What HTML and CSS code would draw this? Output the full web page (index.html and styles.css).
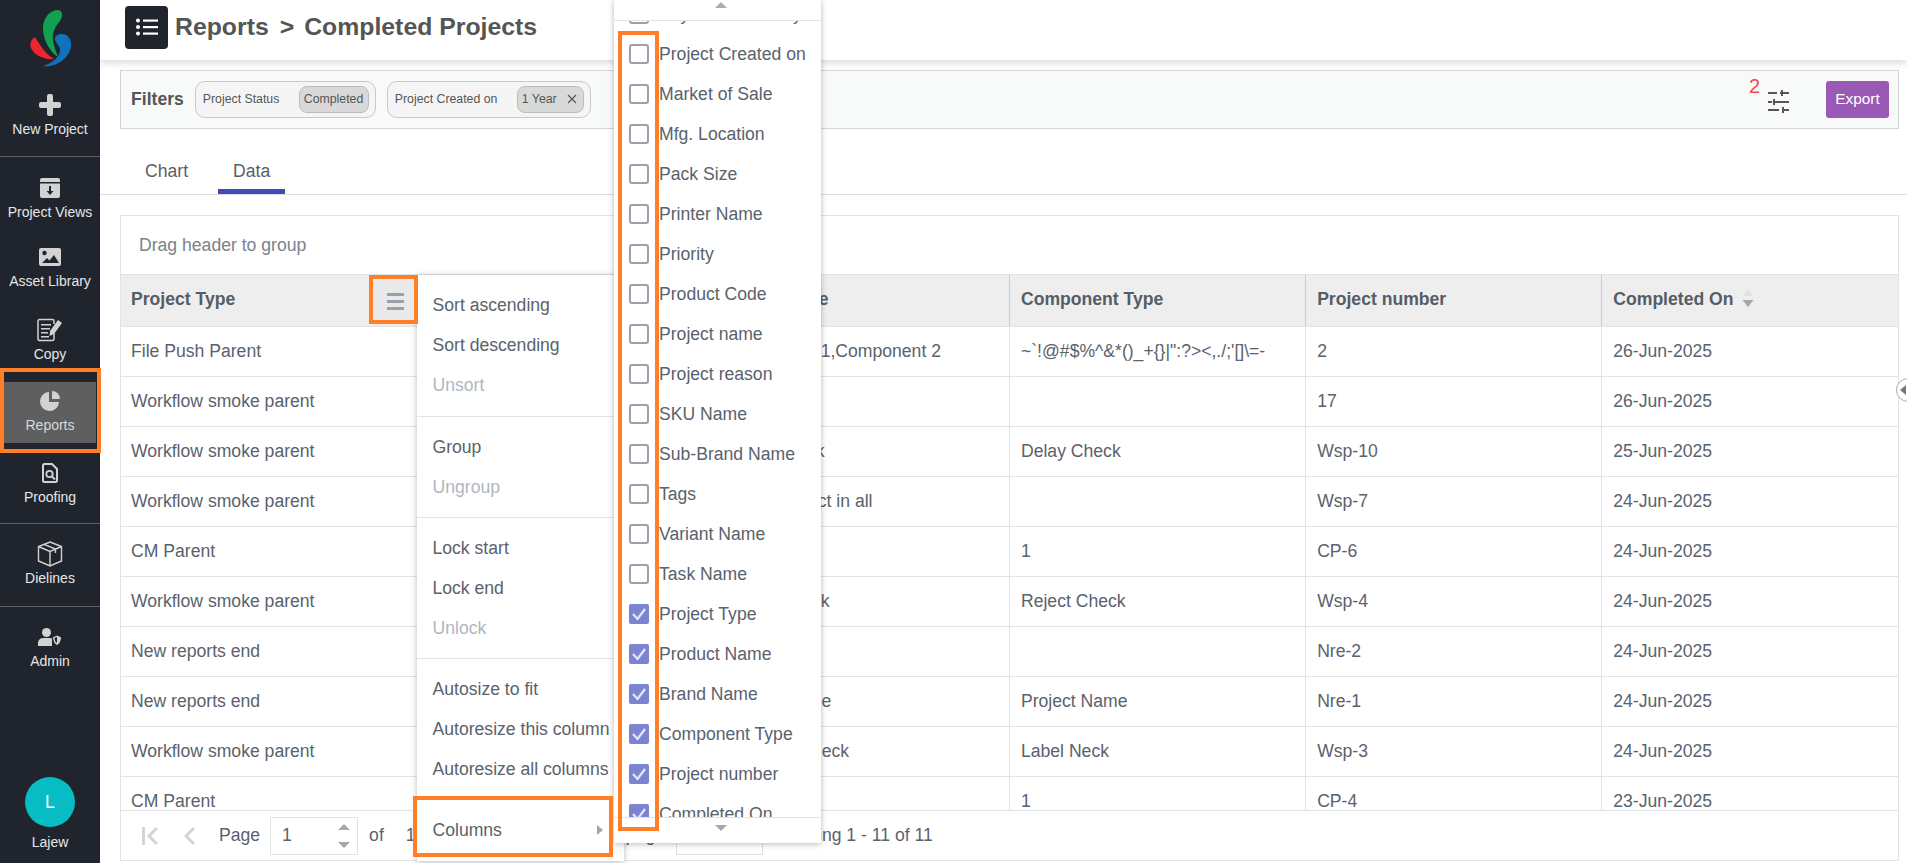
FILE: index.html
```html
<!DOCTYPE html>
<html lang="en">
<head>
<meta charset="utf-8">
<title>Completed Projects</title>
<link rel="stylesheet" href="styles.css">
</head>
<body>
<div class="app">
  <aside class="side">
    <div class="logo">
      <svg width="100" height="85" viewBox="0 0 100 85">
        <path fill="#12a150" d="M58 10C63 10 63 17 60 21C54 28 51 35 54 45C55 50 57 53 58 57C50 52 43 40 43 28C43 18 50 10 58 10Z"/>
        <path fill="#ee2430" d="M35 37C39 43 44 53 54 59C44 60 34 55 31 48C29 43 32 39 35 37Z"/>
        <path fill="#0f72bd" d="M62 34C68 34 72 40 71 47C69 58 56 68 43 66C53 63 61 56 60 49C59 45 55 42 55 39C55 36 58 34 62 34Z"/>
      </svg>
    </div>
    <div class="group group-first">
      <a class="item"><span class="ico"><svg width="22" height="22" viewBox="0 0 22 22"><path fill="#d2d2d2" d="M8 2a2 2 0 0 1 2-2h2a2 2 0 0 1 2 2v6h6a2 2 0 0 1 2 2v2a2 2 0 0 1-2 2h-6v6a2 2 0 0 1-2 2h-2a2 2 0 0 1-2-2v-6H2a2 2 0 0 1-2-2v-2a2 2 0 0 1 2-2h6Z"/></svg></span><span class="lbl">New Project</span></a>
    </div>
    <div class="group group-main">
      <a class="item"><span class="ico"><svg width="22" height="20" viewBox="0 0 22 20"><path fill="#d2d2d2" d="M3 0h16a2 2 0 0 1 2 2v16a2 2 0 0 1-2 2H3a2 2 0 0 1-2-2V2a2 2 0 0 1 2-2Z"/><path fill="#20252d" d="M1 4h20v1.4H1zM10 8h2v5h2.5L11 17l-3.500-4H10z"/></svg></span><span class="lbl">Project Views</span></a>
      <a class="item"><span class="ico"><svg width="22" height="18" viewBox="0 0 22 18"><rect width="22" height="18" rx="2" fill="#d2d2d2"/><circle cx="5.500" cy="5" r="2.200" fill="#20252d"/><path fill="#20252d" d="M3 15l5-5 2.500 2.500L15 7l5 8Z"/></svg></span><span class="lbl">Asset Library</span></a>
      <a class="item"><span class="ico"><svg width="26" height="24" viewBox="0 0 26 24"><path fill="none" stroke="#d2d2d2" stroke-width="1.500" d="M17 14v7a1.500 1.500 0 0 1-1.500 1.500h-13A1.500 1.500 0 0 1 1 21V3a1.500 1.500 0 0 1 1.500-1.500h13A1.500 1.500 0 0 1 17 3v3"/><path fill="#d2d2d2" d="M4 6h10v1.600H4zM4 10h9v1.600H4zM4 14h7v1.600H4zM4 18h8v1.600H4zM21 2l4 3-8 11-4.500 2 .5-5Z"/></svg></span><span class="lbl">Copy</span></a>
      <a class="item item-active"><span class="ico"><svg width="20" height="20" viewBox="0 0 20 20"><path fill="#d2d2d2" d="M9 1a9.500 9.500 0 1 0 10 10H9Z"/><path fill="#d2d2d2" d="M12 0a8 8 0 0 1 8 8h-8Z"/></svg></span><span class="lbl">Reports</span></a>
      <a class="item"><span class="ico"><svg width="16" height="20" viewBox="0 0 16 20"><path fill="none" stroke="#d2d2d2" stroke-width="2" d="M2.500 1H10l5 5v11.500a1.500 1.500 0 0 1-1.500 1.500h-11A1.500 1.500 0 0 1 1 17.500v-15A1.500 1.500 0 0 1 2.500 1Z"/><circle cx="7.500" cy="11" r="3.200" fill="none" stroke="#d2d2d2" stroke-width="1.800"/><path stroke="#d2d2d2" stroke-width="2" d="M10 13.500l3 3"/></svg></span><span class="lbl">Proofing</span></a>
    </div>
    <div class="group">
      <a class="item"><span class="ico"><svg width="26" height="26" viewBox="0 0 26 26"><path fill="none" stroke="#d2d2d2" stroke-width="1.400" d="M13 1l11.500 4.500v14.500L13 25 1.500 20V5.500ZM1.500 5.500L13 10.500 24.500 5.500M13 10.500V25M7 3.300l11.500 4.700V12"/></svg></span><span class="lbl">Dielines</span></a>
    </div>
    <div class="group">
      <a class="item"><span class="ico"><svg width="24" height="18" viewBox="0 0 24 18"><circle cx="8.500" cy="4.500" r="4.500" fill="#d2d2d2"/><path fill="#d2d2d2" d="M0 18v-3a5 5 0 0 1 5-5h7a5 5 0 0 1 2 .4V18Z"/><path fill="#d2d2d2" stroke="#20252d" d="M19 7l4.500 2c0 4-1.500 7-4.500 8.500-3-1.500-4.500-4.500-4.500-8.500Z"/><path fill="#20252d" d="M19 9v6c-1.600-1-2.500-3-2.500-5Z"/></svg></span><span class="lbl">Admin</span></a>
    </div>
    <div class="user">
      <div class="avatar">L</div>
      <span class="lbl">Lajew</span>
    </div>
  </aside>

  <main class="main">
    <header class="top">
      <button class="menu-btn" type="button">
        <svg width="22" height="18" viewBox="0 0 22 18"><g fill="#fff"><circle cx="2" cy="2.500" r="2"/><circle cx="2" cy="9" r="2"/><circle cx="2" cy="15.500" r="2"/><rect x="7" y="1.500" width="15" height="2.200"/><rect x="7" y="8" width="15" height="2.200"/><rect x="7" y="14.500" width="15" height="2.200"/></g></svg>
      </button>
      <h1 class="title">Reports<span class="crumb-sep">&gt;</span>Completed Projects</h1>
    </header>

    <section class="filters">
      <strong class="filters-label">Filters</strong>
      <div class="chip chip-status"><span>Project Status</span><span class="pill">Completed</span></div>
      <div class="chip chip-created"><span>Project Created on</span><span class="pill">1 Year <svg class="pill-x" width="10" height="10" viewBox="0 0 10 10"><path stroke="#555" stroke-width="1.200" d="M1 1l8 8M9 1l-8 8"/></svg></span></div>
      <span class="filter-count">2</span>
      <svg class="sliders" width="21" height="23" viewBox="0 0 21 23"><g fill="#555"><rect y="2" width="9" height="2"/><rect x="12" y="2" width="9" height="2"/><rect x="13" width="2" height="6"/><rect y="11" width="4" height="2"/><rect x="7" y="11" width="14" height="2"/><rect x="5" y="9" width="2" height="6"/><rect y="19" width="11" height="2"/><rect x="14" y="19" width="7" height="2"/><rect x="14" y="17" width="2" height="6"/></g></svg>
      <button class="export" type="button">Export</button>
    </section>

    <nav class="tabs">
      <a class="tab">Chart</a>
      <a class="tab tab-active">Data</a>
    </nav>

    <section class="grid">
      <div class="group-bar">Drag header to group</div>
      <div class="grid-body">
        <table class="table">
          <thead>
            <tr><th>Project Type</th><th>Product Name</th><th>Brand Name</th><th>Component Type</th><th>Project number</th><th>Completed On<svg class="sort" width="12" height="18" viewBox="0 0 12 18"><path fill="#e2e3e5" d="M6 0l5.500 7H.5Z"/><path fill="#a3a8b0" d="M.5 11h11L6 18Z"/></svg></th></tr>
          </thead>
          <tbody>
            <tr><td>File Push Parent</td><td></td><td>Component 1,Component 2</td><td>~`!@#$%^&amp;*()_+{}|":?&gt;&lt;,./;'[]\=-</td><td>2</td><td>26-Jun-2025</td></tr>
            <tr><td>Workflow smoke parent</td><td></td><td></td><td></td><td>17</td><td>26-Jun-2025</td></tr>
            <tr><td>Workflow smoke parent</td><td></td><td>Delay Check</td><td>Delay Check</td><td>Wsp-10</td><td>25-Jun-2025</td></tr>
            <tr><td>Workflow smoke parent</td><td></td><td>Label product in all</td><td></td><td>Wsp-7</td><td>24-Jun-2025</td></tr>
            <tr><td>CM Parent</td><td></td><td></td><td>1</td><td>CP-6</td><td>24-Jun-2025</td></tr>
            <tr><td>Workflow smoke parent</td><td></td><td>Reject Check</td><td>Reject Check</td><td>Wsp-4</td><td>24-Jun-2025</td></tr>
            <tr><td>New reports end</td><td></td><td></td><td></td><td>Nre-2</td><td>24-Jun-2025</td></tr>
            <tr><td>New reports end</td><td></td><td>Project Name</td><td>Project Name</td><td>Nre-1</td><td>24-Jun-2025</td></tr>
            <tr><td>Workflow smoke parent</td><td></td><td>Approval Check</td><td>Label Neck</td><td>Wsp-3</td><td>24-Jun-2025</td></tr>
            <tr><td>CM Parent</td><td></td><td></td><td>1</td><td>CP-4</td><td>23-Jun-2025</td></tr>
          </tbody>
        </table>
      </div>
      <footer class="pager">
        <svg class="pg-first" width="17" height="18" viewBox="0 0 17 18"><path fill="#d3d5d8" d="M0 0h3v18H0z"/><path fill="none" stroke="#d3d5d8" stroke-width="3" d="M15 1L7 9l8 8"/></svg>
        <svg class="pg-prev" width="11" height="18" viewBox="0 0 11 18"><path fill="none" stroke="#d3d5d8" stroke-width="3" d="M10 1L2 9l8 8"/></svg>
        <span class="pg-page">Page</span>
        <div class="pg-input"><span>1</span>
          <svg width="12" height="24" viewBox="0 0 12 24"><path fill="#a3a8b0" d="M6 0l6 6H0ZM0 18h12l-6 6Z"/></svg>
        </div>
        <span class="pg-of">of</span>
        <span class="pg-total">1</span>
        <span class="pg-per">Per page</span>
        <div class="pg-size"></div>
        <span class="pg-count">Showing 1 - 11 of 11</span>
      </footer>
    </section>
  </main>
</div>

<div class="col-menu">
  <div class="cm-group"><div class="cm-item">Sort ascending</div><div class="cm-item">Sort descending</div><div class="cm-item cm-off">Unsort</div></div>
  <div class="cm-group"><div class="cm-item">Group</div><div class="cm-item cm-off">Ungroup</div></div>
  <div class="cm-group"><div class="cm-item">Lock start</div><div class="cm-item">Lock end</div><div class="cm-item cm-off">Unlock</div></div>
  <div class="cm-group"><div class="cm-item">Autosize to fit</div><div class="cm-item">Autoresize this column</div><div class="cm-item">Autoresize all columns</div></div>
  <div class="cm-group cm-last"><div class="cm-item cm-sub">Columns<span class="cm-arrow"></span></div></div>
</div>

<div class="col-list">
  <div class="cl-arrow cl-up"></div>
  <div class="cl-scroll">
    <div class="cl-items">
      <label class="cl-item"><span class="box"></span>Key Accountability</label>
      <label class="cl-item"><span class="box"></span>Project Created on</label>
      <label class="cl-item"><span class="box"></span>Market of Sale</label>
      <label class="cl-item"><span class="box"></span>Mfg. Location</label>
      <label class="cl-item"><span class="box"></span>Pack Size</label>
      <label class="cl-item"><span class="box"></span>Printer Name</label>
      <label class="cl-item"><span class="box"></span>Priority</label>
      <label class="cl-item"><span class="box"></span>Product Code</label>
      <label class="cl-item"><span class="box"></span>Project name</label>
      <label class="cl-item"><span class="box"></span>Project reason</label>
      <label class="cl-item"><span class="box"></span>SKU Name</label>
      <label class="cl-item"><span class="box"></span>Sub-Brand Name</label>
      <label class="cl-item"><span class="box"></span>Tags</label>
      <label class="cl-item"><span class="box"></span>Variant Name</label>
      <label class="cl-item"><span class="box"></span>Task Name</label>
      <label class="cl-item"><span class="box box-on"><svg width="16" height="14" viewBox="0 0 16 14"><path fill="none" stroke="#e6e7f6" stroke-width="2.200" d="M2 7l4.500 5L14 2"/></svg></span>Project Type</label>
      <label class="cl-item"><span class="box box-on"><svg width="16" height="14" viewBox="0 0 16 14"><path fill="none" stroke="#e6e7f6" stroke-width="2.200" d="M2 7l4.500 5L14 2"/></svg></span>Product Name</label>
      <label class="cl-item"><span class="box box-on"><svg width="16" height="14" viewBox="0 0 16 14"><path fill="none" stroke="#e6e7f6" stroke-width="2.200" d="M2 7l4.500 5L14 2"/></svg></span>Brand Name</label>
      <label class="cl-item"><span class="box box-on"><svg width="16" height="14" viewBox="0 0 16 14"><path fill="none" stroke="#e6e7f6" stroke-width="2.200" d="M2 7l4.500 5L14 2"/></svg></span>Component Type</label>
      <label class="cl-item"><span class="box box-on"><svg width="16" height="14" viewBox="0 0 16 14"><path fill="none" stroke="#e6e7f6" stroke-width="2.200" d="M2 7l4.500 5L14 2"/></svg></span>Project number</label>
      <label class="cl-item"><span class="box box-on"><svg width="16" height="14" viewBox="0 0 16 14"><path fill="none" stroke="#e6e7f6" stroke-width="2.200" d="M2 7l4.500 5L14 2"/></svg></span>Completed On</label>
    </div>
  </div>
  <div class="cl-arrow cl-down"></div>
</div>

<button class="head-menu" type="button"><span></span><span></span><span></span></button>
<div class="handle"><i></i></div>

<div class="mark mark-reports"></div>
<div class="mark mark-icon"></div>
<div class="mark mark-columns"></div>
<div class="mark mark-boxes"></div>
</body>
</html>
```

FILE: styles.css
```css
* { box-sizing: border-box; }
html, body { margin: 0; height: 100%; overflow: hidden; background: #fff; }
body { font-family: "Liberation Sans", Arial, sans-serif; font-size: 17.6px; color: #5a626c; position: relative; }

.app { display: flex; height: 863px; }

/* sidebar */
.side { width: 100px; flex: none; background: #20252d; display: flex; flex-direction: column; color: #e6e6e6; }
.logo { height: 85px; }
.logo svg { display: block; }
.group { display: flex; flex-direction: column; gap: 23px; padding: 17px 0; border-bottom: 1px solid #5c6066; }
.group-first { padding: 7px 0 16px; }
.group:nth-child(5) { border-bottom: 0; }
.group-main { padding: 18px 0 15px; }
.group-main .item:nth-child(2) { margin-top: -2px; }
.group-main .item:nth-child(3) { margin-top: 2px; }
.group-main .item:nth-child(5) { margin-top: 1px; }
.item { display: flex; flex-direction: column; align-items: center; height: 48px; }
.item-active { background: #5f5f5f; margin: -6px 4px -7px; padding: 6px 0 7px; height: 61px; color: #d8d8d8; }
.ico { height: 26px; display: flex; align-items: center; justify-content: center; }
.ico svg { display: block; }
.lbl { font-size: 14px; line-height: 22px; white-space: nowrap; }
.user { margin-top: auto; display: flex; flex-direction: column; align-items: center; padding-bottom: 10px; gap: 4px; }
.avatar { width: 50px; height: 50px; border-radius: 50%; background: #07bcc2; color: #fff; font-size: 17.6px; display: flex; align-items: center; justify-content: center; }

/* main */
.main { flex: 1; min-width: 0; display: flex; flex-direction: column; }
.top { height: 60px; flex: none; display: flex; align-items: center; padding: 0 0 6px 25px; box-shadow: 0 2px 8px rgba(0,0,0,.18); }
.menu-btn { width: 43px; height: 43px; border: 0; border-radius: 4px; background: #20252d; display: flex; align-items: center; justify-content: center; padding: 0; }
.title { margin: 0 0 0 7px; font-size: 24.8px; font-weight: 700; color: #555; line-height: 30px; }
.crumb-sep { margin: 0 10px 0 11px; }

.filters { margin: 10px 8px 0 20px; height: 59px; flex: none; border: 1px solid #d4d6d6; background: #f8f9f9; display: flex; align-items: center; padding-left: 10px; position: relative; }
.filters-label { font-size: 17.6px; color: #555; margin-right: 11px; }
.chip { height: 37px; border: 1px solid #c8c8c8; border-radius: 10px; background: #f5f5f5; display: flex; align-items: center; justify-content: space-between; font-size: 12.3px; color: #555; padding: 0 6px 1px 7px; }
.chip-status { width: 181px; }
.chip-created { width: 204px; margin-left: 11px; }
.pill { height: 27px; border: 1px solid #bcbcbc; border-radius: 8px; background: #d9d9d9; display: flex; align-items: center; padding: 0 4px; white-space: pre; }
.chip-status .pill { width: 70px; }
.chip-created .pill { width: 67px; }
.pill-x { margin-left: 7px; }
.filter-count { margin-left: auto; color: #f44a4a; font-size: 20px; align-self: flex-start; margin-top: 4px; }
.sliders { margin: 3px 0 0 8px; display: block; }
.export { width: 63px; height: 37px; margin: 0 9px 0 37px; border: 0; border-radius: 3px; background: #9b59b6; color: #fff; font: 15.4px "Liberation Sans", Arial, sans-serif; padding: 0 0 1px; }

.tabs { height: 66px; flex: none; border-bottom: 1px solid #dcdcdc; display: flex; gap: 15px; padding: 25px 0 0 30px; }
.tab { height: 40px; padding: 6px 15px 0; color: #5a5f66; line-height: 22px; }
.tab-active { border-bottom: 5px solid #3f4db8; }

/* data grid */
.grid { margin: 20px 8px 2px 20px; flex: 1; min-height: 0; border: 1px solid #e2e3e4; display: flex; flex-direction: column; }
.group-bar { height: 58px; flex: none; padding-left: 18px; display: flex; align-items: center; font-size: 17.6px; color: #7a828b; }
.grid-body { flex: 1; min-height: 0; overflow: hidden; }
.table { width: 100%; table-layout: fixed; border-collapse: collapse; }
.table th { height: 52px; padding: 0 11px 2px; background: #eee; text-align: left; font-size: 17.6px; color: #555d67; border-top: 1px solid #e2e3e4; border-bottom: 1px solid #e2e3e4; border-left: 1px solid #ccc; white-space: nowrap; }
.table th:first-child, .table td:first-child { border-left: 0; padding-left: 10px; }
.table td { height: 50px; padding: 0 11px; border-bottom: 1px solid #e2e3e4; border-left: 1px solid #e2e3e4; white-space: nowrap; overflow: hidden; }
.sort { margin-left: 8px; vertical-align: -2px; }

.pager { height: 50px; flex: none; border-top: 1px solid #e2e3e4; display: flex; align-items: center; padding-left: 21px; }
.pg-first { display: block; }
.pg-prev { display: block; margin-left: 25px; }
.pg-page { margin-left: 24px; }
.pg-input { width: 88px; height: 38px; margin-left: 10px; border: 1px solid #dfe0e2; display: flex; align-items: center; justify-content: space-between; padding: 0 7px 0 11px; }
.pg-input svg { display: block; height: 24px; }
.pg-of { margin-left: 11px; }
.pg-total { margin-left: 22px; }
.pg-per { margin-left: 178px; white-space: nowrap; }
.pg-size { width: 87px; height: 38px; margin-left: 11px; border: 1px solid #dfe0e2; }
.pg-count { margin-left: 11px; white-space: nowrap; }

/* column menu */
.col-menu { position: absolute; left: 417px; top: 275px; width: 207px; height: 586px; background: #fff; box-shadow: 0 1px 6px rgba(0,0,0,.28); }
.cm-group { padding: 10px 0; border-bottom: 1px solid #e2e3e4; }
.cm-group:first-child { padding-bottom: 11px; }
.cm-last { border-bottom: 0; }
.cm-item { height: 40px; line-height: 40px; padding-left: 15.500px; white-space: nowrap; position: relative; }
.cm-off { color: #b0b6bf; }
.cm-arrow { position: absolute; left: 180px; top: 15px; border-left: 6px solid #a3a8b0; border-top: 5.500px solid transparent; border-bottom: 5.500px solid transparent; }

.col-list { position: absolute; left: 614px; top: 0; width: 207px; height: 843px; background: #fff; box-shadow: 0 1px 6px rgba(0,0,0,.28); display: flex; flex-direction: column; }
.cl-scroll { flex: 1; min-height: 0; overflow: hidden; border-top: 1px solid #e2e3e4; border-bottom: 1px solid #e2e3e4; }
.cl-items { margin-top: -27px; }
.cl-item { height: 40px; display: flex; align-items: center; padding-left: 15px; white-space: nowrap; }
.cl-arrow { height: 20px; flex: none; position: relative; }
.cl-arrow::after { content: ""; position: absolute; left: 101px; border-left: 6px solid transparent; border-right: 6px solid transparent; }
.cl-up::after { top: 2px; border-bottom: 6px solid #a9aeb5; }
.cl-down { height: 25px; }
.cl-down::after { top: 7px; border-top: 6px solid #a3a8b0; }
.box { width: 20px; height: 20px; flex: none; margin-right: 10px; border: 2px solid #9aa1ac; border-radius: 3px; background: #fff; display: flex; align-items: center; justify-content: center; }
.box-on { background: #7c84d2; border-color: #7c84d2; border-radius: 2px; }
.box-on svg { display: block; }

.head-menu { position: absolute; left: 373px; top: 279px; width: 41px; height: 41px; border: 0; background: #e9e9e9; padding: 3px 0 0 4px; display: flex; flex-direction: column; align-items: center; justify-content: center; gap: 4px; }
.head-menu span { width: 17px; height: 3px; background: #9aa0a9; }

.handle { position: absolute; left: 1896px; top: 378px; width: 24px; height: 24px; border-radius: 50%; background: #fff; border: 1px solid #aaa; }
.handle i { position: absolute; left: 3px; top: 6px; border-right: 6px solid #777; border-top: 5px solid transparent; border-bottom: 5px solid transparent; }

/* orange annotations */
.mark { position: absolute; border: 4.500px solid #ff7f27; }
.mark-reports { left: 0; top: 368px; width: 101px; height: 85px; }
.mark-icon { left: 369px; top: 275px; width: 49px; height: 49px; }
.mark-columns { left: 413px; top: 796px; width: 200px; height: 61px; }
.mark-boxes { left: 618px; top: 31px; width: 41px; height: 800px; }
```
